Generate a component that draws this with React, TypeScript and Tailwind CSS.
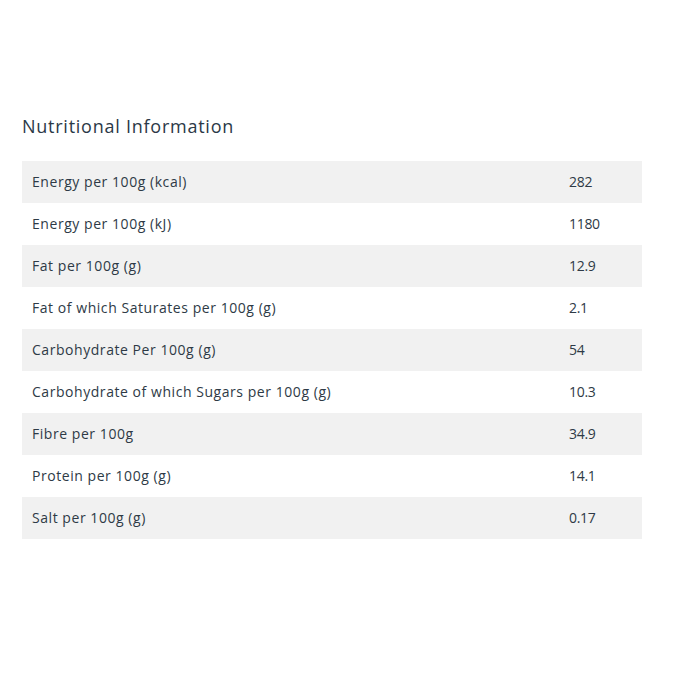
import React from "react";

const rows: [string, string][] = [
  ["Energy per 100g (kcal)", "282"],
  ["Energy per 100g (kJ)", "1180"],
  ["Fat per 100g (g)", "12.9"],
  ["Fat of which Saturates per 100g (g)", "2.1"],
  ["Carbohydrate Per 100g (g)", "54"],
  ["Carbohydrate of which Sugars per 100g (g)", "10.3"],
  ["Fibre per 100g", "34.9"],
  ["Protein per 100g (g)", "14.1"],
  ["Salt per 100g (g)", "0.17"],
];

export default function App() {
  return (
    <div className="w-[678px] h-[678px] bg-white pt-[114px] px-[22px] text-[#2e3a46]" style={{ fontFamily: '"Open Sans", "Liberation Sans", sans-serif' }}>
      <h2 className="text-[18px] leading-[24px] tracking-[0.75px] text-[#2b3947] mb-[23px]">Nutritional Information</h2>
      <div className="w-[620px] flex flex-col">
        {rows.map(([k, v], i) => (
          <div key={k} className={`flex items-center h-[42px] pb-[1px] text-[14px] tracking-[0.55px] ${i % 2 === 0 ? "bg-[#f1f1f1]" : "bg-white"}`}>
            <div className="pl-[10px] w-[547px]">{k}</div>
            <div className="tracking-[-0.3px]">{v}</div>
          </div>
        ))}
      </div>
    </div>
  );
}
